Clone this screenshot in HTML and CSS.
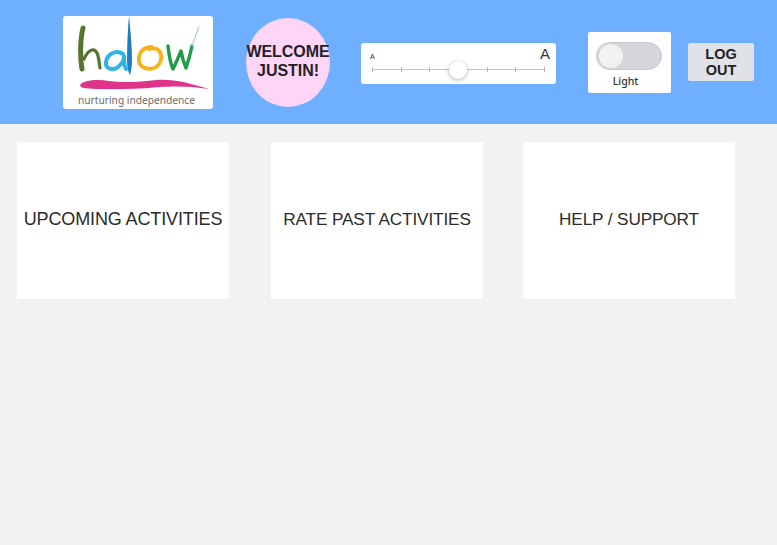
FILE: index.html
```html
<!DOCTYPE html>
<html>

<head>
    <title>Halow</title>
    <link rel="stylesheet" href="styles.css">
</head>

<body>
    <header class="topbar">
        <div class="logo">
            <svg class="logo-mark" viewBox="0 0 150 76" width="150" height="76" role="img" aria-label="halow">
                <g fill="none" stroke-linecap="round" stroke-linejoin="round">
                    <path d="M20 12 C17 24 17 42 19 53" stroke="#56752f" stroke-width="5" />
                    <path d="M21 43 C25 34 31 31 34 37 C36 41 36 47 37 52" stroke="#56752f" stroke-width="3.2" />
                    <path d="M60 38 C52 33 44 39 43 46 C42 53 50 55 55 51 C59 48 61 44 61 40 C61 45 61 50 63 53" stroke="#2fb4e8" stroke-width="4" />
                    <path d="M89 31 C80 31 75 37 76 45 C77 52 85 54 91 52 C98 49 100 41 97 36 C95 32 90 32 86 33" stroke="#f5b21a" stroke-width="3.8" />
                    <path d="M105 30 C106 38 107 47 110 53 C113 47 116 40 118 35 C119 41 121 47 123 52 C125 46 127 40 129 30" stroke="#1f9d4a" stroke-width="3.4" />
                    <path d="M129 30 C131 24 133 18 136 11" stroke="#a9d8b4" stroke-width="1.2" />
                </g>
                <path d="M66 0 C67 10 69 30 69 44 C69 50 68 56 67 59 C65 56 64 50 64 44 C64 30 65 10 66 0 Z" fill="#1c7fc0" />
            </svg>
            <svg class="logo-swoosh" viewBox="0 0 150 12" width="150" height="12">
                <path d="M17 6 C20 1 35 0 46 2 C62 4 76 3 94 1 C112 0 125 4 146 10 C128 7 114 7 96 8 C78 10 62 10 46 10 C35 10 22 10 18 8 Z" fill="#e0338a" />
            </svg>
            <span class="logo-tag">nurturing independence</span>
        </div>

        <div class="welcome">WELCOME JUSTIN!</div>

        <div class="font-size">
            <div class="font-size-labels">
                <span class="small-a">A</span>
                <span class="big-a">A</span>
            </div>
            <div class="track">
                <i></i><i></i><i></i><i></i><i></i><i></i><i></i>
                <span class="thumb"></span>
            </div>
        </div>

        <div class="theme">
            <div class="switch">
                <span class="switch-thumb"></span>
            </div>
            <span class="theme-label">Light</span>
        </div>

        <button class="logout">LOG OUT</button>
    </header>

    <main class="cards">
        <a class="card card-wide-text">UPCOMING ACTIVITIES</a>
        <a class="card card-middle">RATE PAST ACTIVITIES</a>
        <a class="card">HELP / SUPPORT</a>
    </main>
</body>

</html>
```

FILE: styles.css
```css
body {
    margin: 0;
    background-color: #f1f2f4;
    font-family: "Liberation Sans", Arial, sans-serif;
    color: #2b2b2b;
}

.topbar {
    display: flex;
    align-items: center;
    height: 124px;
    padding-left: 63px;
    background-color: #6eb0ff;
}

.logo {
    display: flex;
    flex-direction: column;
    align-items: flex-start;
    width: 150px;
    height: 93px;
    margin-top: 1px;
    background-color: #fff;
    border-radius: 3px;
    overflow: hidden;
}

.logo-mark {
    display: block;
    flex: none;
    filter: blur(0.4px);
}

.logo-swoosh {
    display: block;
    flex: none;
    margin-top: -13px;
    filter: blur(0.4px);
}

.logo-tag {
    margin-top: 2px;
    padding-left: 15px;
    font-family: "Noto Sans", sans-serif;
    font-size: 10.2px;
    line-height: 14px;
    color: #6c6c6c;
    white-space: nowrap;
}

.welcome {
    display: flex;
    align-items: center;
    justify-content: center;
    box-sizing: border-box;
    width: 84px;
    height: 89px;
    margin-left: 33px;
    padding-bottom: 2px;
    background-color: #fdd5f6;
    border-radius: 50%;
    font-size: 16px;
    font-weight: bold;
    line-height: 19px;
    letter-spacing: -0.05px;
    text-align: center;
    color: #231f26;
}

.font-size {
    box-sizing: border-box;
    width: 195px;
    height: 41px;
    margin-top: 3px;
    margin-left: 31px;
    padding: 5px 11px 0;
    background-color: #fff;
    border-radius: 3px;
}

.font-size-labels {
    display: flex;
    justify-content: space-between;
    align-items: flex-end;
    height: 13px;
    color: #333;
}

.small-a {
    margin-left: -2px;
    font-size: 7px;
    line-height: 9px;
}

.big-a {
    margin-right: -5px;
    font-size: 15px;
    line-height: 15px;
}

.track {
    position: relative;
    display: flex;
    justify-content: space-between;
    align-items: center;
    height: 5px;
    margin-top: 6px;
    background: linear-gradient(#c4c4c4, #c4c4c4) center / 100% 1px no-repeat;
}

.track i {
    width: 1px;
    height: 5px;
    background-color: #b5b5b5;
}

.thumb {
    position: absolute;
    left: 77px;
    top: -6px;
    width: 18px;
    height: 18px;
    background-color: #fff;
    border-radius: 50%;
    box-shadow: 0 1px 4px rgba(0, 0, 0, 0.3);
}

.theme {
    display: flex;
    flex-direction: column;
    align-items: center;
    box-sizing: border-box;
    width: 83px;
    height: 61px;
    margin-left: 32px;
    padding-top: 10px;
    background-color: #fff;
    border-radius: 2px;
}

.switch {
    box-sizing: border-box;
    width: 66px;
    height: 28px;
    margin-right: 1px;
    padding: 1px 2px;
    background-color: #d6d5da;
    border: 1px solid #c9c9c9;
    border-radius: 14px;
}

.switch-thumb {
    display: block;
    width: 24px;
    height: 24px;
    background-color: #f2f2f2;
    border-radius: 50%;
}

.theme-label {
    margin-top: 3px;
    margin-right: 8px;
    font-family: "Noto Sans", sans-serif;
    font-size: 10.5px;
    font-weight: 500;
    line-height: 16px;
    color: #333;
}

.logout {
    width: 66px;
    height: 38px;
    margin-left: 17px;
    padding: 0 10px;
    background-color: #e0e2e7;
    border: none;
    border-radius: 2px;
    font-family: "Liberation Sans", Arial, sans-serif;
    font-size: 14.5px;
    font-weight: bold;
    line-height: 16px;
    color: #222;
}

.cards {
    display: flex;
    padding: 18px 17px;
}

.card {
    display: flex;
    align-items: center;
    justify-content: center;
    box-sizing: border-box;
    width: 212px;
    height: 157px;
    padding-bottom: 2px;
    background-color: #fff;
    font-size: 17.2px;
    letter-spacing: -0.13px;
    text-align: center;
    white-space: nowrap;
}

.card-wide-text {
    font-size: 18px;
}

.card-middle {
    margin: 0 40px 0 42px;
}
```
